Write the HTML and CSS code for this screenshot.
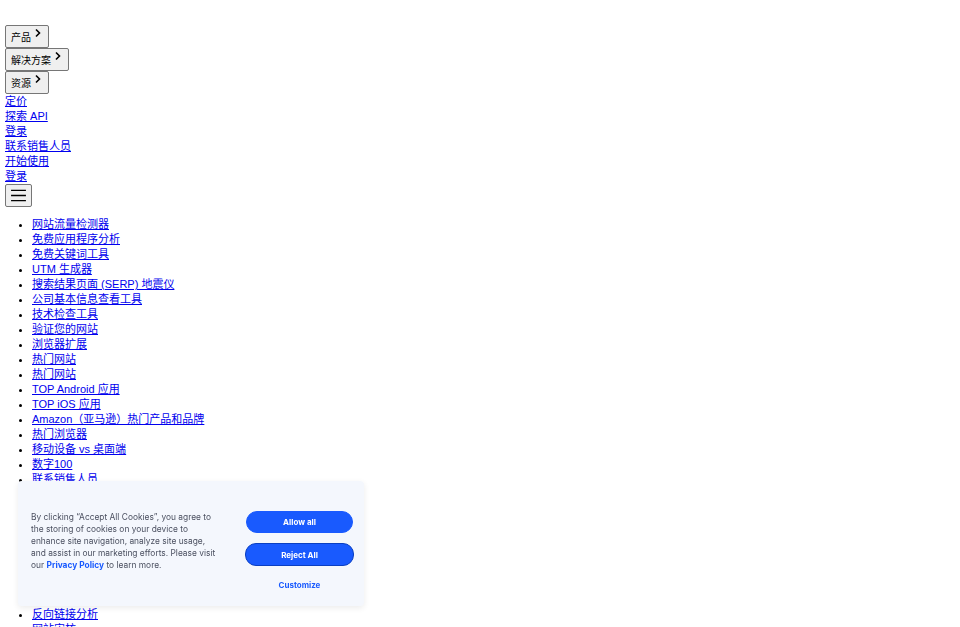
FILE: index.html
```html
<!DOCTYPE html>
<html lang="zh">
<head>
<meta charset="utf-8">
<title>Similarweb</title>
<link rel="stylesheet" href="styles.css">
</head>
<body>
<header class="nav">
  <div class="nav-item"><button class="menu-btn">产品 <svg class="chev" viewBox="0 0 10 10" width="10" height="10"><path d="M3 1.5 L6.5 5 L3 8.5" fill="none" stroke="#000" stroke-width="1.6"/></svg></button></div>
  <div class="nav-item"><button class="menu-btn">解决方案 <svg class="chev" viewBox="0 0 10 10" width="10" height="10"><path d="M3 1.5 L6.5 5 L3 8.5" fill="none" stroke="#000" stroke-width="1.6"/></svg></button></div>
  <div class="nav-item"><button class="menu-btn">资源 <svg class="chev" viewBox="0 0 10 10" width="10" height="10"><path d="M3 1.5 L6.5 5 L3 8.5" fill="none" stroke="#000" stroke-width="1.6"/></svg></button></div>
  <div class="nav-link"><a href="#">定价</a></div>
  <div class="nav-link"><a href="#">探索 API</a></div>
  <div class="nav-link"><a href="#">登录</a></div>
  <div class="nav-link"><a href="#">联系销售人员</a></div>
  <div class="nav-link"><a href="#">开始使用</a></div>
  <div class="nav-link"><a href="#">登录</a></div>
  <div class="nav-item"><button class="burger" aria-label="menu"><svg viewBox="0 0 18 14" width="17" height="13"><path d="M1 1.5 H17 M1 7 H17 M1 12.5 H17" stroke="#000" stroke-width="1.5" fill="none"/></svg></button></div>
</header>
<ul class="links">
  <li><a href="#">网站流量检测器</a></li>
  <li><a href="#">免费应用程序分析</a></li>
  <li><a href="#">免费关键词工具</a></li>
  <li><a href="#">UTM 生成器</a></li>
  <li><a href="#">搜索结果页面 (SERP) 地震仪</a></li>
  <li><a href="#">公司基本信息查看工具</a></li>
  <li><a href="#">技术检查工具</a></li>
  <li><a href="#">验证您的网站</a></li>
  <li><a href="#">浏览器扩展</a></li>
  <li><a href="#">热门网站</a></li>
  <li><a href="#">热门网站</a></li>
  <li><a href="#">TOP Android 应用</a></li>
  <li><a href="#">TOP iOS 应用</a></li>
  <li><a href="#">Amazon（亚马逊）热门产品和品牌</a></li>
  <li><a href="#">热门浏览器</a></li>
  <li><a href="#">移动设备 vs 桌面端</a></li>
  <li><a href="#">数字100</a></li>
  <li><a href="#">联系销售人员</a></li>
  <li><a href="#">关键词研究</a></li>
  <li><a href="#">竞争对手分析</a></li>
  <li><a href="#">自然搜索</a></li>
  <li><a href="#">付费搜索</a></li>
  <li><a href="#">展示广告</a></li>
  <li><a href="#">社交媒体</a></li>
  <li><a href="#">受众分析</a></li>
  <li><a href="#">市场研究</a></li>
  <li><a href="#">反向链接分析</a></li>
  <li><a href="#">网站审核</a></li>
</ul>
<div class="cookie">
  <p class="cookie-text">By clicking “Accept All Cookies”, you agree to<br>the storing of cookies on your device to<br>enhance site navigation, analyze site usage,<br>and assist in our marketing efforts. Please visit<br>our <a href="#" class="policy">Privacy Policy</a> to learn more.</p>
  <div class="cookie-actions">
    <button class="pill">Allow all</button>
    <button class="pill pill-outline">Reject All</button>
    <button class="customize">Customize</button>
  </div>
</div>
</body>
</html>
```
FILE: styles.css
```css
html, body {
  margin: 0;
  padding: 0;
}
body {
  padding: 25px 5px 0;
  font-family: "Liberation Sans", "Noto Sans CJK SC", sans-serif;
  font-size: 11px;
  line-height: 15px;
  color: #000;
  background: #fff;
}
a {
  color: #0000ee;
}
.nav-item {
  display: block;
}
.menu-btn {
  font-family: "Liberation Sans", "Noto Sans CJK SC", sans-serif;
  font-size: 10px;
  height: 23px;
  padding: 0 5px 2px;
  margin: 0;
  border: 1px solid #767676;
  border-radius: 2px;
  background: #efefef;
  color: #000;
  display: inline-flex;
  align-items: flex-end;
  gap: 2px;
  line-height: 14px;
  vertical-align: top;
}
.chev {
  align-self: flex-start;
  margin-top: 2px;
}
.nav-link {
  line-height: 15px;
}
.burger {
  width: 27px;
  height: 23px;
  margin: 0;
  padding: 0;
  border: 1px solid #767676;
  border-radius: 2px;
  background: #efefef;
  display: inline-flex;
  align-items: center;
  justify-content: center;
  vertical-align: top;
}
.links {
  margin: 10px 0 0;
  padding-left: 27px;
}
.links li {
  line-height: 15px;
}
.cookie {
  position: fixed;
  left: 18px;
  bottom: 21px;
  width: 346px;
  height: 125px;
  box-sizing: border-box;
  padding: 0 10px 0 13px;
  background: #f4f7fd;
  border-radius: 4px;
  box-shadow: 0 2px 6px rgba(0, 0, 0, 0.08);
  display: flex;
  align-items: center;
  justify-content: space-between;
  font-family: "Inter", "Liberation Sans", sans-serif;
}
.cookie-text {
  margin: 0 0 5px;
  width: 195px;
  font-size: 8.4px;
  line-height: 12px;
  color: #4b5060;
  white-space: nowrap;
}
.policy {
  color: #195afe;
  font-weight: 700;
  text-decoration: none;
}
.cookie-actions {
  width: 109px;
  display: flex;
  flex-direction: column;
  align-items: center;
  gap: 10px;
  padding-top: 14px;
}
.pill {
  width: 107px;
  height: 22px;
  border: 1px solid #195afe;
  border-radius: 11px;
  background: #195afe;
  color: #fff;
  font-family: "Inter", "Liberation Sans", sans-serif;
  font-size: 8px;
  font-weight: 700;
  margin: 0;
  padding: 0;
}
.pill-outline {
  width: 109px;
  height: 23px;
  border-color: #0a3fc2;
}
.customize {
  margin-top: 4px;
  border: 0;
  background: none;
  color: #195afe;
  font-family: "Inter", "Liberation Sans", sans-serif;
  font-size: 8px;
  font-weight: 700;
  padding: 0;
}
```
